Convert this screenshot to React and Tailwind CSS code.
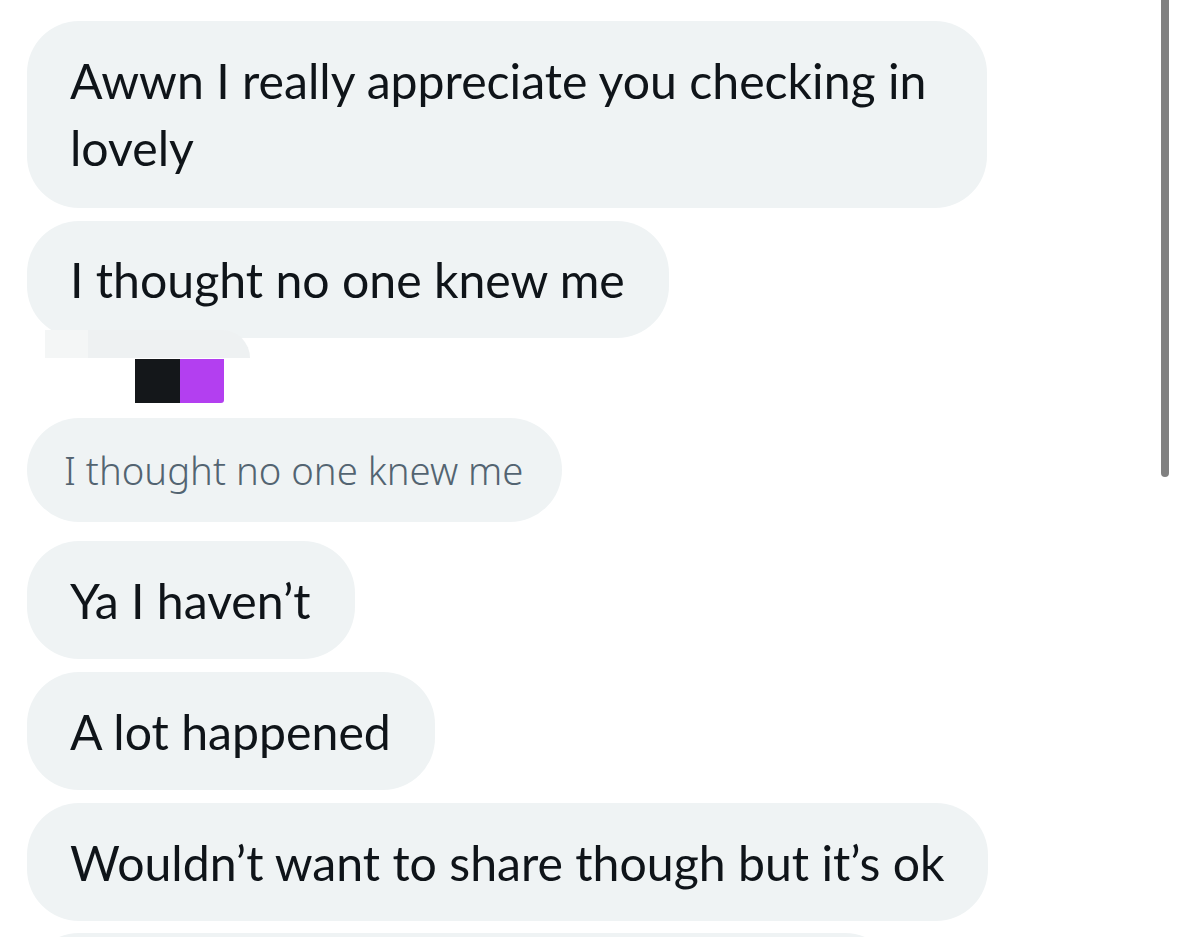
import React from 'react';

const bubble =
    'bg-[#eff3f4] rounded-[52px] pl-[43px] pr-[44px] text-[#0f1419] text-[48.2px] leading-[67px] font-["Lato",sans-serif]';

const messages = [
    { id: 'ya', text: 'Ya I haven’t', mt: 'mt-[19px]' },
    { id: 'lot', text: 'A lot happened', mt: 'mt-[13px]' },
    { id: 'share', text: 'Wouldn’t want to share though but it’s ok', mt: 'mt-[13px]' },
];

const App = () => {
    return (
        <div className="relative h-[937px] w-[1179px] overflow-hidden bg-white">
            <div className="flex flex-col items-start pl-[27px] pt-[21px]">
                <div className={`${bubble} w-[960px] pt-[26px] pb-[27px]`}>
                    Awwn I really appreciate you checking in lovely
                </div>

                <div className={`${bubble} mt-[13px] flex h-[117px] items-center`}>I thought no one knew me</div>

                {/* top of the clipped reply card */}
                <div className="-mt-[8px] ml-[18px] flex h-[28px] w-[205px] overflow-hidden rounded-tr-[40px] bg-[#eef1f2]">
                    <div className="h-full w-[43px] bg-[#f4f6f6]" />
                </div>

                <div className="ml-[108px] mt-[1px] flex h-[44px]">
                    <div className="w-[45px] bg-[#14171a]" />
                    <div className="w-[44px] rounded-br-[3px] bg-[#b33ff0]" />
                </div>

                <div className='mt-[15px] flex h-[104px] items-center rounded-[52px] bg-[#eff3f4] pl-[37px] pr-[39px] font-["Noto_Sans","Open_Sans",sans-serif] text-[38.3px] font-light leading-[52px] text-[#536471]'>
                    I thought no one knew me
                </div>

                {messages.map((m) => (
                    <div key={m.id} className={`${bubble} ${m.mt} flex h-[118px] items-center`}>
                        {m.text}
                    </div>
                ))}

                <div className="mt-[12px] h-[117px] w-[870px] rounded-[52px] bg-[#eff3f4]" />
            </div>

            {/* scroll indicator */}
            <div className="absolute right-[10px] top-0 h-[477px] w-[8px] rounded-b-full bg-[#808080]" />
        </div>
    );
};

export default App;
